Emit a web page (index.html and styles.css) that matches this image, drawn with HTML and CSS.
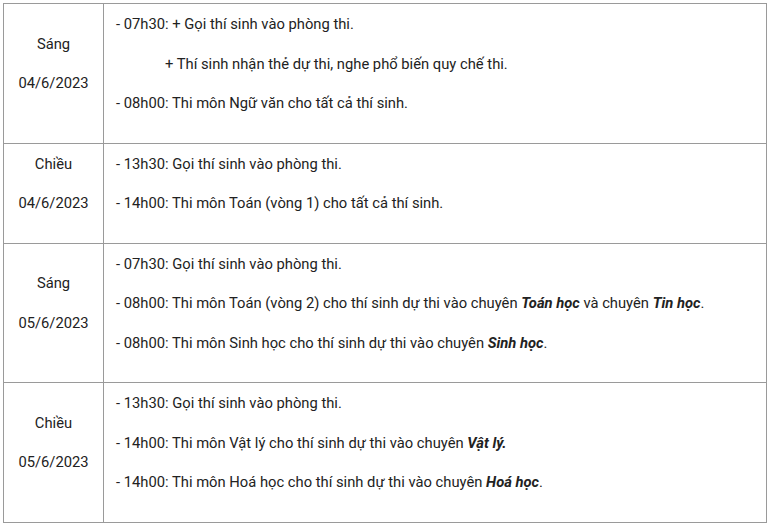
FILE: index.html
```html
<!DOCTYPE html>
<html lang="vi">
<head>
<meta charset="utf-8">
<title>Lịch thi</title>
<link rel="stylesheet" href="styles.css">
</head>
<body>
<table class="schedule">
  <tbody>
    <tr>
      <td class="day"><p>Sáng</p><p>04/6/2023</p></td>
      <td class="events">
        <p>- 07h30: + Gọi thí sinh vào phòng thi.</p>
        <p class="indent">+ Thí sinh nhận thẻ dự thi, nghe phổ biến quy chế thi.</p>
        <p>- 08h00: Thi môn Ngữ văn cho tất cả thí sinh.</p>
      </td>
    </tr>
    <tr>
      <td class="day"><p>Chiều</p><p>04/6/2023</p></td>
      <td class="events">
        <p>- 13h30: Gọi thí sinh vào phòng thi.</p>
        <p>- 14h00: Thi môn Toán (vòng 1) cho tất cả thí sinh.</p>
      </td>
    </tr>
    <tr>
      <td class="day"><p>Sáng</p><p>05/6/2023</p></td>
      <td class="events">
        <p>- 07h30: Gọi thí sinh vào phòng thi.</p>
        <p>- 08h00: Thi môn Toán (vòng 2) cho thí sinh dự thi vào chuyên <b><i>Toán học</i></b> và chuyên <b><i>Tin học</i></b>.</p>
        <p>- 08h00: Thi môn Sinh học cho thí sinh dự thi vào chuyên <b><i>Sinh học</i></b>.</p>
      </td>
    </tr>
    <tr>
      <td class="day"><p>Chiều</p><p>05/6/2023</p></td>
      <td class="events">
        <p>- 13h30: Gọi thí sinh vào phòng thi.</p>
        <p>- 14h00: Thi môn Vật lý cho thí sinh dự thi vào chuyên <b><i>Vật lý.</i></b></p>
        <p>- 14h00: Thi môn Hoá học cho thí sinh dự thi vào chuyên <b><i>Hoá học</i></b>.</p>
      </td>
    </tr>
  </tbody>
</table>
</body>
</html>
```
FILE: styles.css
```css
html, body {
  margin: 0;
  padding: 0;
  background: #fff;
}
body {
  padding: 3px 3px 0 3px;
  font-family: Roboto, "Noto Sans", sans-serif;
  font-size: 14.75px;
  color: #222;
}
.schedule {
  width: 764px;
  border-collapse: collapse;
  border: 1px solid #c8c8c8;
}
.schedule td {
  border: 1px solid #9a9a9a;
  padding: 11px 12px 9px 12px;
  vertical-align: middle;
}
.schedule td.day {
  width: 75px;
  text-align: center;
}
.schedule td.events {
  vertical-align: top;
}
.schedule p {
  margin: 0 0 20px 0;
  line-height: 19.5px;
}
.schedule .indent {
  padding-left: 49px;
}
.schedule b {
  font-weight: 700;
}
```
